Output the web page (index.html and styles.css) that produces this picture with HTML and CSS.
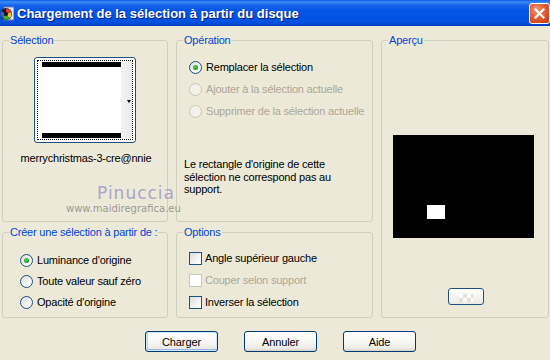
FILE: index.html
```html
<!DOCTYPE html>
<html lang="fr">
<head>
<meta charset="utf-8">
<title>Chargement de la sélection à partir du disque</title>
<link rel="stylesheet" href="styles.css">
</head>
<body>
<div class="window">
  <div class="titlebar">
    <span class="app-icon">
      <svg width="14" height="15" viewBox="0 0 14 15">
        <rect x="4" y="1" width="10" height="13" fill="#dfe6ef" stroke="#6d7f95" stroke-width="1"/>
        <circle cx="6" cy="8" r="6" fill="#1b1b1b"/>
        <path d="M6 8 L6 2.5 A5.5 5.5 0 0 1 11.2 6.2 Z" fill="#e23c2f"/>
        <path d="M6 8 L11.2 6.2 A5.5 5.5 0 0 1 9.5 12.2 Z" fill="#f2c12c"/>
        <path d="M6 8 L9.5 12.2 A5.5 5.5 0 0 1 2.2 11.8 Z" fill="#3cae3a"/>
        <path d="M6 8 L2.2 11.8 A5.5 5.5 0 0 1 1.2 4.8 Z" fill="#2e62d6"/>
        <circle cx="6" cy="8" r="2" fill="#111"/>
      </svg>
    </span>
    <span class="title">Chargement de la sélection à partir du disque</span>
    <span class="close">
      <svg width="11" height="11" viewBox="0 0 11 11"><path d="M1.5 1.5 L9.5 9.5 M9.5 1.5 L1.5 9.5" stroke="#fff" stroke-width="2.2" stroke-linecap="square"/></svg>
    </span>
  </div>

  <div class="content">
    <div class="groups">
      <fieldset class="group g-sel">
        <legend>Sélection</legend>
        <div class="thumb">
          <div class="thumb-inner">
            <div class="thumb-img">
              <div class="bar"></div>
              <div class="bar"></div>
            </div>
            <div class="thumb-side"><span class="arrow"></span></div>
          </div>
        </div>
        <div class="thumb-name">merrychristmas-3-cre@nnie</div>
      </fieldset>

      <fieldset class="group g-op">
        <legend>Opération</legend>
        <div class="options-list op-list">
          <label class="opt"><span class="radio checked"></span>Remplacer la sélection</label>
          <label class="opt disabled"><span class="radio"></span>Ajouter à la sélection actuelle</label>
          <label class="opt disabled"><span class="radio"></span>Supprimer de la sélection actuelle</label>
        </div>
        <p class="note">Le rectangle d'origine de cette sélection ne correspond pas au support.</p>
      </fieldset>

      <fieldset class="group g-prev">
        <legend>Aperçu</legend>
        <div class="preview"><div class="preview-sel"></div></div>
        <div class="mini-btn"><span class="checker"></span></div>
      </fieldset>

      <fieldset class="group g-create">
        <legend>Créer une sélection à partir de :</legend>
        <div class="options-list">
          <label class="opt"><span class="radio checked"></span>Luminance d'origine</label>
          <label class="opt"><span class="radio"></span>Toute valeur sauf zéro</label>
          <label class="opt"><span class="radio"></span>Opacité d'origine</label>
        </div>
      </fieldset>

      <fieldset class="group g-opts">
        <legend>Options</legend>
        <div class="options-list">
          <label class="opt"><span class="check"></span>Angle supérieur gauche</label>
          <label class="opt disabled"><span class="check"></span>Couper selon support</label>
          <label class="opt"><span class="check"></span>Inverser la sélection</label>
        </div>
      </fieldset>
    </div>

    <div class="buttons">
      <button class="btn default">Charger</button>
      <button class="btn">Annuler</button>
      <button class="btn">Aide</button>
    </div>

    <div class="watermark">
      <div class="wm-big">Pinuccia</div>
      <div class="wm-small">www.maidiregrafica.eu</div>
    </div>
  </div>
</div>
</body>
</html>
```

FILE: styles.css
```css
* { box-sizing: border-box; }
html, body { margin: 0; padding: 0; }
body {
  width: 550px;
  height: 360px;
  overflow: hidden;
  background: #ece9d8;
  font-family: "Liberation Sans", Arial, sans-serif;
  font-size: 11px;
  letter-spacing: -0.2px;
  color: #000;
}
.window { position: relative; width: 550px; height: 360px; }

.titlebar {
  height: 26px;
  display: flex;
  align-items: center;
  background: linear-gradient(to bottom, #0a5fe8 0px, #3d8bf5 2px, #1a64ec 5px, #0456e6 10px, #0053e3 18px, #0352de 22px, #0246cf 25px, #0a3fb8 26px);
  color: #fff;
}
.app-icon { width: 14px; height: 15px; margin-top: 1px; display: flex; }
.title {
  margin-left: 3px;
  font-family: "Liberation Sans", Arial, sans-serif;
  font-weight: bold;
  font-size: 13px;
  letter-spacing: 0;
  text-shadow: 1px 1px 0 #0a1e7a;
  flex: 1;
}
.close {
  width: 21px; height: 21px;
  margin-right: 0;
  margin-top: 1px;
  border: 1px solid #fff;
  border-radius: 3px;
  background: radial-gradient(circle at 35% 30%, #f29b7c 0%, #e5683f 35%, #d4471f 75%, #c23a14 100%);
  display: flex; align-items: center; justify-content: center;
}

.content { padding: 8px 1px 0 2px; }

.groups {
  display: grid;
  grid-template-columns: 166px 197px 168px;
  grid-template-rows: 188px 92px;
  column-gap: 8px;
  row-gap: 4px;
}
.group {
  margin: 0;
  padding: 0;
  border: 1px solid #d0d0bf;
  border-radius: 3px;
  min-width: 0;
  position: relative;
}
.group legend {
  color: #0046d5;
  padding: 0 1px;
  margin-left: 6px;
  line-height: 13px;
  font-size: 11px;
}
.g-sel { grid-column: 1; grid-row: 1; }
.g-op { grid-column: 2; grid-row: 1; }
.g-prev { grid-column: 3; grid-row: 1 / span 2; }
.g-create { grid-column: 1; grid-row: 2; }
.g-opts { grid-column: 2; grid-row: 2; }

/* Sélection thumbnail */
.thumb {
  width: 102px; height: 86px;
  margin: 10px auto 0;
  border: 1px solid #1c5180;
  border-radius: 3px;
  background: #fff;
  padding: 2px;
}
.thumb-inner {
  width: 100%; height: 100%;
  border: 1px dotted #000;
  display: flex;
  padding: 1px 0 1px 4px;
}
.thumb-img {
  width: 79px;
  background: #fff;
  display: flex;
  flex-direction: column;
  justify-content: space-between;
}
.thumb-img .bar { height: 5px; background: #000; }
.thumb-side {
  flex: 1;
  background: linear-gradient(to right, #f4f4f4, #e8e8e8);
  position: relative;
}
.arrow {
  position: absolute;
  right: 1px; top: 38px;
  width: 0; height: 0;
  border-left: 2.5px solid transparent;
  border-right: 2.5px solid transparent;
  border-top: 3px solid #000;
}
.thumb-name {
  text-align: center;
  margin-top: 9px;
  line-height: 13px;
  padding-left: 2px;
}

/* option lists */
.options-list {
  display: flex;
  flex-direction: column;
  gap: 8px;
  padding-left: 12px;
  padding-top: 12px;
}
.op-list { padding-top: 14px; gap: 9px; }
.opt {
  display: flex;
  align-items: center;
  height: 13px;
  line-height: 13px;
  white-space: nowrap;
}
.opt.disabled { color: #aca899; }
.radio {
  width: 13px; height: 13px;
  border-radius: 50%;
  border: 1px solid #1c5180;
  background: linear-gradient(135deg, #dcdcd7 0%, #f4f4f2 60%, #fff 100%);
  margin-right: 4px;
  flex: none;
  position: relative;
}
.radio.checked::after {
  content: "";
  position: absolute;
  left: 3px; top: 3px;
  width: 5px; height: 5px;
  border-radius: 50%;
  background: radial-gradient(circle at 40% 40%, #5ed35e 0%, #21a121 60%, #1a8a1a 100%);
}
.opt.disabled .radio {
  border-color: #cac8bb;
  background: #f2f1ea;
}
.check {
  width: 13px; height: 13px;
  border: 1px solid #1c5180;
  background: linear-gradient(135deg, #dcdcd7 0%, #f4f4f2 60%, #fff 100%);
  margin-right: 3px;
  flex: none;
}
.opt.disabled .check {
  border-color: #cac8bb;
  background: #fff;
}
.g-create .options-list { padding-left: 17px; gap: 8px; padding-top: 15px; }
.g-opts .options-list { padding-left: 12px; gap: 9px; padding-top: 13px; }

.note {
  margin: 40px 0 0 7px;
  line-height: 12.5px;
  width: 170px;
}

/* preview */
.preview {
  width: 141px; height: 103px;
  margin: 88px 0 0 11px;
  background: #000;
  position: relative;
}
.preview-sel {
  position: absolute;
  left: 34px; top: 70px;
  width: 18px; height: 14px;
  background: #fff;
}
.mini-btn {
  width: 36px; height: 17px;
  margin: 50px 0 0 66px;
  border: 1px solid #1c5180;
  border-radius: 3px;
  background: linear-gradient(to bottom, #fff, #eceae3);
  display: flex; align-items: flex-end; justify-content: center;
}
.checker {
  width: 14px; height: 8px;
  margin-bottom: 2px;
  background: repeating-conic-gradient(#dcdcd7 0 25%, #fff 0 50%) 0 0 / 8px 8px;
  opacity: 0.8;
}

/* buttons */
.buttons {
  display: flex;
  justify-content: center;
  gap: 26px;
  margin-top: 13px;
  padding-left: 10px;
}
.btn {
  width: 73px; height: 21px;
  padding: 0;
  border: 1px solid #003c74;
  border-radius: 3px;
  background: linear-gradient(to bottom, #ffffff 0%, #f7f7f4 50%, #ecebe6 85%, #d6d0c5 100%);
  font-family: "Liberation Sans", Arial, sans-serif;
  font-size: 11px;
  letter-spacing: -0.1px;
  color: #000;
}
.btn.default {
  box-shadow: inset 0 0 0 1px #cee7ff, inset 0 -1px 0 1px #98b8ea, inset 1px 0 0 1px #bcd4f6;
}

/* watermark overlay */
.watermark {
  position: absolute;
  left: 66px; top: 184px;
  width: 116px;
  text-align: right;
  pointer-events: none;
  letter-spacing: 0;
}
.wm-big {
  font-family: "DejaVu Sans", Verdana, sans-serif;
  font-size: 17px;
  letter-spacing: 1px;
  color: #a9a6c7;
  line-height: 19px;
  padding-right: 7px;
}
.wm-small {
  font-family: "DejaVu Sans", Verdana, sans-serif;
  font-size: 10px;
  color: #9c9a95;
  line-height: 12px;
  padding-right: 2px;
}
```
